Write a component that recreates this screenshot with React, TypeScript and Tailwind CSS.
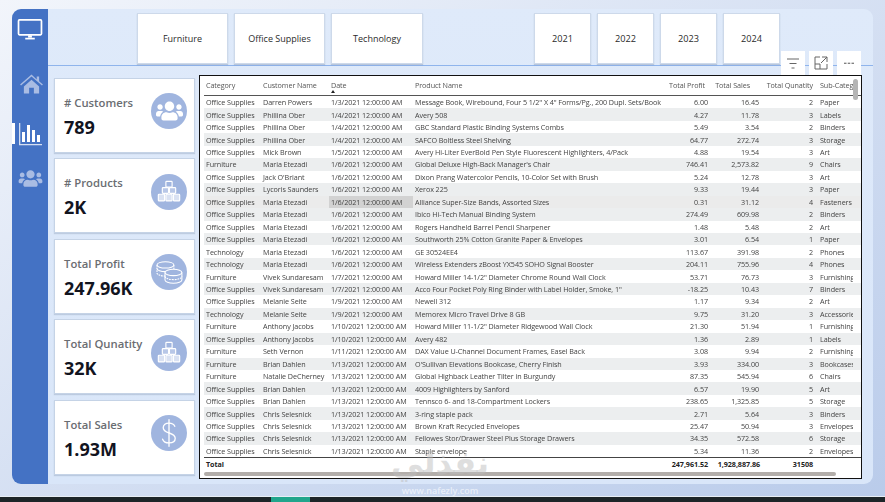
import type { ReactNode } from "react";
import { FaUsers } from "react-icons/fa";

const rows: string[][] = [
  ["Office Supplies", "Darren Powers", "1/3/2021 12:00:00 AM", 'Message Book, Wirebound, Four 5 1/2" X 4" Forms/Pg., 200 Dupl. Sets/Book', "6.00", "16.45", "2", "Paper"],
  ["Office Supplies", "Phillina Ober", "1/4/2021 12:00:00 AM", "Avery 508", "4.27", "11.78", "3", "Labels"],
  ["Office Supplies", "Phillina Ober", "1/4/2021 12:00:00 AM", "GBC Standard Plastic Binding Systems Combs", "5.49", "3.54", "2", "Binders"],
  ["Office Supplies", "Phillina Ober", "1/4/2021 12:00:00 AM", "SAFCO Boltless Steel Shelving", "64.77", "272.74", "3", "Storage"],
  ["Office Supplies", "Mick Brown", "1/5/2021 12:00:00 AM", "Avery Hi-Liter EverBold Pen Style Fluorescent Highlighters, 4/Pack", "4.88", "19.54", "3", "Art"],
  ["Furniture", "Maria Etezadi", "1/6/2021 12:00:00 AM", "Global Deluxe High-Back Manager's Chair", "746.41", "2,573.82", "9", "Chairs"],
  ["Office Supplies", "Jack O'Briant", "1/6/2021 12:00:00 AM", "Dixon Prang Watercolor Pencils, 10-Color Set with Brush", "5.24", "12.78", "3", "Art"],
  ["Office Supplies", "Lycoris Saunders", "1/6/2021 12:00:00 AM", "Xerox 225", "9.33", "19.44", "3", "Paper"],
  ["Office Supplies", "Maria Etezadi", "1/6/2021 12:00:00 AM", "Alliance Super-Size Bands, Assorted Sizes", "0.31", "31.12", "4", "Fasteners"],
  ["Office Supplies", "Maria Etezadi", "1/6/2021 12:00:00 AM", "Ibico Hi-Tech Manual Binding System", "274.49", "609.98", "2", "Binders"],
  ["Office Supplies", "Maria Etezadi", "1/6/2021 12:00:00 AM", "Rogers Handheld Barrel Pencil Sharpener", "1.48", "5.48", "2", "Art"],
  ["Office Supplies", "Maria Etezadi", "1/6/2021 12:00:00 AM", "Southworth 25% Cotton Granite Paper & Envelopes", "3.01", "6.54", "1", "Paper"],
  ["Technology", "Maria Etezadi", "1/6/2021 12:00:00 AM", "GE 30524EE4", "113.67", "391.98", "2", "Phones"],
  ["Technology", "Maria Etezadi", "1/6/2021 12:00:00 AM", "Wireless Extenders zBoost YX545 SOHO Signal Booster", "204.11", "755.96", "4", "Phones"],
  ["Furniture", "Vivek Sundaresam", "1/7/2021 12:00:00 AM", 'Howard Miller 14-1/2" Diameter Chrome Round Wall Clock', "53.71", "76.73", "3", "Furnishings"],
  ["Office Supplies", "Vivek Sundaresam", "1/7/2021 12:00:00 AM", 'Acco Four Pocket Poly Ring Binder with Label Holder, Smoke, 1"', "-18.25", "10.43", "7", "Binders"],
  ["Office Supplies", "Melanie Seite", "1/9/2021 12:00:00 AM", "Newell 312", "1.17", "9.34", "2", "Art"],
  ["Technology", "Melanie Seite", "1/9/2021 12:00:00 AM", "Memorex Micro Travel Drive 8 GB", "9.75", "31.20", "3", "Accessories"],
  ["Furniture", "Anthony Jacobs", "1/10/2021 12:00:00 AM", 'Howard Miller 11-1/2" Diameter Ridgewood Wall Clock', "21.30", "51.94", "1", "Furnishings"],
  ["Office Supplies", "Anthony Jacobs", "1/10/2021 12:00:00 AM", "Avery 482", "1.36", "2.89", "1", "Labels"],
  ["Furniture", "Seth Vernon", "1/11/2021 12:00:00 AM", "DAX Value U-Channel Document Frames, Easel Back", "3.08", "9.94", "2", "Furnishings"],
  ["Furniture", "Brian Dahlen", "1/13/2021 12:00:00 AM", "O'Sullivan Elevations Bookcase, Cherry Finish", "3.93", "334.00", "3", "Bookcases"],
  ["Furniture", "Natalie DeCherney", "1/13/2021 12:00:00 AM", "Global Highback Leather Tilter in Burgundy", "87.35", "545.94", "6", "Chairs"],
  ["Office Supplies", "Brian Dahlen", "1/13/2021 12:00:00 AM", "4009 Highlighters by Sanford", "6.57", "19.90", "5", "Art"],
  ["Office Supplies", "Brian Dahlen", "1/13/2021 12:00:00 AM", "Tennsco 6- and 18-Compartment Lockers", "238.65", "1,325.85", "5", "Storage"],
  ["Office Supplies", "Chris Selesnick", "1/13/2021 12:00:00 AM", "3-ring staple pack", "2.71", "5.64", "3", "Binders"],
  ["Office Supplies", "Chris Selesnick", "1/13/2021 12:00:00 AM", "Brown Kraft Recycled Envelopes", "25.47", "50.94", "3", "Envelopes"],
  ["Office Supplies", "Chris Selesnick", "1/13/2021 12:00:00 AM", "Fellowes Stor/Drawer Steel Plus Storage Drawers", "34.35", "572.58", "6", "Storage"],
  ["Office Supplies", "Chris Selesnick", "1/13/2021 12:00:00 AM", "Staple envelope", "5.34", "11.36", "2", "Envelopes"],
];

const gridCols = "grid grid-cols-[57px_68px_84px_241px_56px_51px_54px_38px]";

function Boxes() {
  return (
    <svg viewBox="0 0 36 36" className="h-[32px] w-[32px]" fill="none" stroke="#fff" strokeWidth="1.3">
      <rect x="14.5" y="6" width="7" height="6.5" rx="0.8" />
      <rect x="10.5" y="13" width="7" height="6.5" rx="0.8" fill="#fff" fillOpacity="0.25" />
      <rect x="18.5" y="13" width="7" height="6.5" rx="0.8" fill="#fff" fillOpacity="0.25" />
      <rect x="6" y="20.5" width="7" height="7.5" rx="0.8" fill="#fff" fillOpacity="0.6" />
      <rect x="14.5" y="20.5" width="7" height="7.5" rx="0.8" fill="#fff" fillOpacity="0.6" />
      <rect x="23" y="20.5" width="7" height="7.5" rx="0.8" fill="#fff" fillOpacity="0.6" />
    </svg>
  );
}

function Coins() {
  return (
    <svg viewBox="0 0 36 36" className="h-[32px] w-[32px]" fill="none" stroke="#fff" strokeWidth="1.2">
      <ellipse cx="14" cy="10" rx="9.5" ry="3.6" />
      <path d="M4.500 10v9c0 2 4.200 3.600 9.500 3.600M23.500 10v5" strokeDasharray="2 1" />
      <path d="M4.500 14c0 2 4.200 3.600 9.500 3.600" />
      <ellipse cx="23" cy="18.5" rx="9.5" ry="3.6" fill="#a0b5df" />
      <path d="M13.500 18.500v8.500c0 2 4.200 3.600 9.500 3.600s9.500-1.600 9.500-3.600v-8.500" />
      <path d="M13.500 23c0 2 4.200 3.600 9.500 3.600s9.500-1.600 9.500-3.600" strokeDasharray="2 1" />
    </svg>
  );
}

function Dollar() {
  return (
    <svg viewBox="0 0 36 36" className="h-[32px] w-[32px]" fill="none" stroke="#fff" strokeWidth="1.5" strokeLinecap="round">
      <path d="M18 3v30" />
      <path d="M24.500 10.500c-1-2.500-3.500-3.700-6.500-3.700-3.700 0-6.500 2-6.500 5.200 0 7.500 13.500 4.500 13.500 12 0 3.200-3 5.200-7 5.200-3.500 0-6.200-1.500-7.200-4.200" />
    </svg>
  );
}

function Kpi({ label, value, icon }: { label: string; value: string; icon: ReactNode }) {
  return (
    <div className="flex h-[75px] items-center justify-between border border-[#c5d3e6] bg-white pl-[9px] pr-[7px] shadow-[0_1px_1px_rgba(100,120,150,0.25)]">
      <div className="flex flex-col gap-[3px] pt-[2px]">
        <div className="text-[11.300px] leading-[18px] font-semibold whitespace-nowrap text-[#6a6d72]">{label}</div>
        <div className="text-[18px] leading-[24px] font-bold text-[#12141f]">{value}</div>
      </div>
      <div className="mb-[8px] flex h-[36px] w-[36px] shrink-0 items-center justify-center rounded-full bg-[#a0b5df]">{icon}</div>
    </div>
  );
}

function Slicer({ label, className }: { label: string; className: string }) {
  return (
    <div className={`flex h-[51px] items-center justify-center border border-[#cdd9ea] bg-white text-[#2b2b2b] shadow-[0_1px_1px_rgba(100,120,150,0.3)] ${className}`}>
      {label}
    </div>
  );
}

function Sidebar() {
  return (
    <div className="relative flex w-[36px] shrink-0 flex-col items-center rounded-l-[9px] bg-[#4472c4]">
      <svg viewBox="0 0 26 23" className="mt-[10px] h-[22px] w-[26px]" fill="none">
        <rect x="1" y="1" width="24" height="15.500" rx="1" stroke="#fff" strokeWidth="1.800" />
        <path d="M11 17h4v2.500h-4z" fill="#fff" />
        <path d="M8 20.500h10" stroke="#fff" strokeWidth="1.800" />
      </svg>
      <svg viewBox="0 0 24 21" className="mt-[33px] ml-[3px] h-[20px] w-[23px]" fill="#a9bce3">
        <path d="M12 0.500 0 11l1 1.200L12 2.700l11 9.500 1-1.200-4-3.500V2.500h-2.500v3.200z" />
        <path d="M4 13l8-7 8 7v7.500h-5.500v-6h-5v6H4z" />
      </svg>
      <div className="mt-[29px] flex h-[23px] w-full items-center justify-center">
        <svg viewBox="0 0 24 23" className="h-[23px] w-[24px]" fill="#fff">
          <path d="M1 0h1.300v21H24v1.300H1z" fill="#d5dff2" />
          <rect x="4" y="9" width="3" height="10" />
          <rect x="9" y="2" width="3" height="17" />
          <rect x="14" y="7" width="3" height="12" />
          <rect x="19" y="12" width="3" height="7" />
        </svg>
      </div>
      <FaUsers className="mt-[23px] h-[19px] w-[25px] text-[#a9bce3]" />
      <div className="absolute top-[114px] left-0 h-[21px] w-[3px] bg-white" />
    </div>
  );
}

function DataTable() {
  return (
    <div className="relative h-[404px] w-[663px] shrink-0 border border-[#111] bg-white pl-[4px] text-[7.200px] tracking-[-0.08px] text-[#444]">
      <div className={`${gridCols} h-[20.500px] items-center border-b border-[#555] text-[#555] blur-[0.25px]`}>
        <div className="pl-[2px]">Category</div>
        <div className="pl-[2px]">Customer Name</div>
        <div className="relative pl-[2px]">
          Date
          <span className="absolute top-[10px] left-[2px] h-0 w-0 border-x-[2.500px] border-b-[3px] border-x-transparent border-b-[#222]" />
        </div>
        <div className="pl-[2px]">Product Name</div>
        <div className="pr-[5px] text-right whitespace-nowrap">Total Profit</div>
        <div className="pr-[11px] text-right whitespace-nowrap">Total Sales</div>
        <div className="pr-[2px] text-right whitespace-nowrap">Total Qunatity</div>
        <div className="overflow-hidden pl-[5px] whitespace-nowrap">Sub-Category</div>
      </div>
      {rows.map((r, i) => (
        <div key={i} className={`${gridCols} h-[12.460px] items-center leading-[12px] ${i % 2 === 1 ? "bg-[#eceeef]" : i === 8 ? "bg-[#ebebeb]" : "bg-white"}`}>
          <div className="pl-[2px] whitespace-nowrap blur-[0.25px]">{r[0]}</div>
          <div className="pl-[2px] whitespace-nowrap blur-[0.25px]">{r[1]}</div>
          <div className={`pl-[2px] whitespace-nowrap ${i === 8 ? "bg-[#d2d2d2]" : ""}`}>
            <span className="blur-[0.25px]">{r[2]}</span>
          </div>
          <div className="pl-[2px] whitespace-nowrap blur-[0.25px]">{r[3]}</div>
          <div className="pr-[2px] text-right blur-[0.25px]">{r[4]}</div>
          <div className="pr-[2px] text-right blur-[0.25px]">{r[5]}</div>
          <div className="pr-[2px] text-right blur-[0.25px]">{r[6]}</div>
          <div className="overflow-hidden pl-[5px] whitespace-nowrap blur-[0.25px]">{r[7]}</div>
        </div>
      ))}
      <div className={`${gridCols} h-[14px] items-center border-t border-[#444] font-bold text-[#222]`}>
        <div className="pl-[2px]">Total</div>
        <div />
        <div />
        <div />
        <div className="pr-[2px] text-right">247,961.52</div>
        <div className="pr-[1px] text-right whitespace-nowrap">1,928,887.86</div>
        <div className="pr-[2px] text-right">31508</div>
        <div />
      </div>
      <div className="absolute top-[396px] left-[4px] h-[4px] w-[632px] rounded-full bg-[#b3aeaa]" />
      <div className="absolute top-[3px] left-[653px] h-[21px] w-[5px] rounded-full bg-[#b5b5b5]" />
    </div>
  );
}

export default function App() {
  return (
    <div className="relative flex h-[502px] w-[885px] flex-col overflow-hidden bg-gradient-to-br from-[#f2f5fb] to-[#b9cbea] font-['Open_Sans','Noto_Sans',sans-serif]">
      <div className="flex h-[496px] flex-col px-[12px] pt-[9px]">
        <div className="flex h-[475px] w-[861px] rounded-[9px] bg-gradient-to-b from-[#dfeafa] to-[#d9e6f9]">
          <Sidebar />
          <div className="flex min-w-0 flex-1 flex-col">
            {/* Slicers */}
            <div className="flex h-[57px] shrink-0 border-b-[1.500px] border-[#8fb4ec] pt-[4px] pl-[89px] text-[9px]">
              <div className="flex gap-[6px]">
                <Slicer label="Furniture" className="w-[91px]" />
                <Slicer label="Office Supplies" className="w-[91px]" />
                <Slicer label="Technology" className="w-[92px]" />
              </div>
              <div className="ml-[111px] flex gap-[6px] text-[9.200px]">
                <Slicer label="2021" className="w-[57px]" />
                <Slicer label="2022" className="w-[57px]" />
                <Slicer label="2023" className="w-[57px]" />
                <Slicer label="2024" className="w-[57px]" />
              </div>
            </div>
            {/* KPI cards and table */}
            <div className="flex gap-[4px] pt-[8.500px] pl-[6px]">
              <div className="mt-[3px] flex w-[141px] shrink-0 flex-col gap-[5.500px]">
                <Kpi label="# Customers" value="789" icon={<FaUsers className="h-[22px] w-[27px] text-white" />} />
                <Kpi label="# Products" value="2K" icon={<Boxes />} />
                <Kpi label="Total Profit" value="247.96K" icon={<Coins />} />
                <Kpi label="Total Qunatity" value="32K" icon={<Boxes />} />
                <Kpi label="Total Sales" value="1.93M" icon={<Dollar />} />
              </div>
              <DataTable />
            </div>
          </div>
        </div>
      </div>

      {/* Visual header icons over the table edge */}
      <div className="absolute top-[51px] left-[781px] flex gap-[4px]">
        <div className="flex h-[24px] w-[24px] items-center justify-center bg-white">
          <svg viewBox="0 0 14 11" className="h-[11px] w-[14px]" stroke="#666" strokeWidth="1" fill="none">
            <path d="M1 1h12M3.500 5.500h7M5.500 10h3" />
          </svg>
        </div>
        <div className="flex h-[24px] w-[24px] items-center justify-center bg-white">
          <svg viewBox="0 0 14 14" className="h-[14px] w-[14px]" stroke="#666" strokeWidth="1" fill="none">
            <path d="M6 1H1v12h12V8M8 1h5v5M13 1 7 7M1 8h5v5" />
          </svg>
        </div>
        <div className="flex h-[24px] w-[24px] items-center justify-center bg-white">
          <svg viewBox="0 0 12 3" className="h-[3px] w-[10px]" fill="#777">
            <rect x="0" y="0.500" width="3" height="1.500" />
            <rect x="4.500" y="0.500" width="3" height="1.500" />
            <rect x="9" y="0.500" width="3" height="1.500" />
          </svg>
        </div>
      </div>

      {/* Site watermark */}
      <div className="absolute top-[440px] left-[385px] flex w-[110px] flex-col items-center">
        <div dir="rtl" className="font-['DejaVu_Sans',sans-serif] text-[32px] leading-[46px] font-bold text-[#bdbdbd]/50">نفذلي</div>
        <div className="text-[9px] leading-[10px] font-semibold text-white/60">www.nafezly.com</div>
      </div>

      {/* Taskbar strip cut off by the capture */}
      <div className="relative h-[6px] border-t border-[#e8eef5] bg-[#1d2528]">
        <div className="absolute top-0 left-[271px] h-[5px] w-[39px] bg-[#21a58c]" />
      </div>
    </div>
  );
}
